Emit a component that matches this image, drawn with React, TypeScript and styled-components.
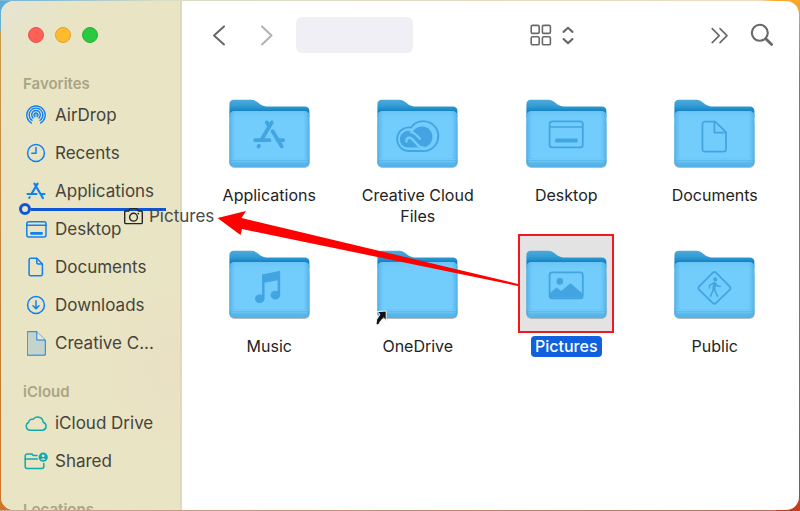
import React from "react";
import styled, { createGlobalStyle } from "styled-components";

const GlobalStyle = createGlobalStyle`
  *, *::before, *::after { box-sizing: border-box; }
  body {
    margin: 0;
    font-family: Inter, "Liberation Sans", sans-serif;
    color: #232323;
    background: #c2892f;
  }
  button { font: inherit; color: inherit; background: none; border: 0; padding: 0; }
`;

const Wallpaper = styled.div`
  height: 100vh;
  padding: 1px;
  background:
    linear-gradient(to right, #c9a98f, #bb705a 97%, transparent 97%) bottom / 100% 1px no-repeat,
    linear-gradient(to right, #7cb7d6 4%, #d9dcc4 20%, #ecdcc0 95%, transparent 97%) top / 100% 1px no-repeat,
    linear-gradient(to bottom, #fba92a, #b56d1f 16%, #b5642c 60%, #c63d1c) right / 50% 100% no-repeat,
    linear-gradient(to bottom, #59abd9, #6ab0d4 28px, #c99a4a 34px, #bf8439 60%, #cf7526) left / 50% 100% no-repeat;
`;

const Window = styled.div`
  position: relative;
  display: flex;
  height: 100%;
  overflow: hidden;
  border-radius: 13px;
  background: #ffffff;
`;

const Sidebar = styled.nav`
  flex: 0 0 181px;
  overflow: hidden;
  border-right: 2px solid #e0dabb;
  background:
    radial-gradient(circle at 0 0, #e6e4d2, transparent 80px),
    radial-gradient(circle at 100% 72%, #e9e0c5, transparent 80px),
    #e9e4c4;
`;

const WindowControls = styled.div`
  display: flex;
  align-items: center;
  gap: 11px;
  height: 68px;
  padding-left: 27px;
`;

const ControlDot = styled.button<{ $fill: string; $edge: string }>`
  width: 16px;
  height: 16px;
  border-radius: 50%;
  background: ${(p) => p.$fill};
  border: 1px solid ${(p) => p.$edge};
`;

const Section = styled.section`
  margin-bottom: 19px;
`;

const SectionTitle = styled.h2`
  margin: 4px 0 1px;
  padding-left: 22px;
  font-size: 15px;
  line-height: 22px;
  font-weight: 600;
  color: #a9a486;
`;

const NavList = styled.ul`
  margin: 0;
  padding: 0;
  list-style: none;
`;

const NavRow = styled.li`
  position: relative;
`;

const NavLink = styled.a`
  display: flex;
  align-items: center;
  gap: 6px;
  height: 38px;
  padding: 0 16px 0 22px;
  font-size: 17px;
  color: #45433b;
  text-decoration: none;
  white-space: nowrap;
`;

const NavIcon = styled.span<{ $color: string }>`
  flex: 0 0 26px;
  display: flex;
  justify-content: center;
  color: ${(p) => p.$color};
`;

const InsertionMark = styled.span`
  position: absolute;
  left: 18px;
  right: 14px;
  bottom: -5px;
  display: flex;
  align-items: center;

  &::before {
    content: "";
    width: 12px;
    height: 12px;
    border: 3px solid #0f56d6;
    border-radius: 50%;
  }
  &::after {
    content: "";
    flex: 1;
    height: 3px;
    background: #0f56d6;
  }
`;

const DragGhost = styled.div`
  position: absolute;
  left: 122px;
  top: 205px;
  display: flex;
  align-items: center;
  gap: 5px;
  font-size: 17px;
  line-height: 20px;
  color: #4a4a46;
`;

const Main = styled.main`
  flex: 1;
  min-width: 0;
`;

const Toolbar = styled.header`
  display: flex;
  align-items: center;
  height: 67px;
  padding: 0 25px 0 27px;
  color: #686868;
`;

const ToolButton = styled.button<{ $dim?: boolean }>`
  display: flex;
  align-items: center;
  justify-content: center;
  min-width: 20px;
  height: 32px;
  opacity: ${(p) => (p.$dim ? 0.5 : 1)};
`;

const HistoryButtons = styled.div`
  display: flex;
  gap: 28px;
`;

const TitlePlate = styled.div`
  flex: 0 0 117px;
  height: 36px;
  margin-left: 19px;
  border-radius: 6px;
  background: #f0eff5;
`;

const ViewButton = styled(ToolButton)`
  gap: 10px;
  margin-left: 117px;
`;

const ToolbarEnd = styled.div`
  display: flex;
  gap: 20px;
  margin-left: auto;
`;

const FileGrid = styled.div`
  display: grid;
  grid-template-columns: repeat(4, 1fr);
  row-gap: 7px;
  padding: 15px 10px 0 13px;
`;

const FileItem = styled.button`
  display: flex;
  flex-direction: column;
  align-items: center;
  gap: 3px;
`;

const Thumb = styled.span<{ $selected?: boolean }>`
  display: flex;
  align-items: center;
  justify-content: center;
  width: 96px;
  height: 99px;
  padding-top: 2px;
  border: 2px solid ${(p) => (p.$selected ? "#f3161c" : "transparent")};
  background: ${(p) => (p.$selected ? "#e4e3e4" : "transparent")};
`;

const FileName = styled.span<{ $selected?: boolean }>`
  max-width: 124px;
  padding: 0 4px;
  border-radius: 4px;
  font-size: 16px;
  line-height: 21px;
  font-weight: ${(p) => (p.$selected ? 500 : 400)};
  color: ${(p) => (p.$selected ? "#ffffff" : "#232323")};
  background: ${(p) => (p.$selected ? "#1160de" : "transparent")};
`;

const Annotation = styled.svg`
  position: absolute;
  left: 216px;
  top: 209px;
  pointer-events: none;
`;

const line = {
  fill: "none",
  stroke: "currentColor",
  strokeLinecap: "round",
  strokeLinejoin: "round",
} as const;

const AirDropIcon = () => (
  <svg width="20" height="20" viewBox="0 0 20 20" {...line} strokeWidth="1.4">
    <path d="M5.4 18.1A9.2 9.2 0 1 1 14.6 18.1" />
    <path d="M6 15.4A6.8 6.8 0 1 1 14 15.4" />
    <path d="M7 12.9A4.3 4.3 0 1 1 13 12.9" />
    <path d="M8.8 11.6A2 2 0 1 1 11.2 11.6" />
    <circle cx="10" cy="10" r=".8" fill="currentColor" stroke="none" />
  </svg>
);

const ClockIcon = () => (
  <svg width="20" height="20" viewBox="0 0 20 20" {...line} strokeWidth="1.5">
    <circle cx="10" cy="10" r="8.4" />
    <path d="M10 4.6V10.2H5.8" />
  </svg>
);

const AppsIcon = () => (
  <svg width="20" height="18" viewBox="0 0 20 18" {...line} strokeWidth="2.2">
    <path d="M11.6 1.6L5.4 12" />
    <path d="M8.5 1.6L9.3 3" />
    <path d="M11 6L16.9 16" />
    <path d="M1.6 12H10.4M15.6 12H18.4" />
    <path d="M3.6 15.3L3.3 15.8" />
  </svg>
);

const DesktopIcon = () => (
  <svg width="21" height="17" viewBox="0 0 21 17" {...line} strokeWidth="1.5">
    <rect x=".8" y=".8" width="19.2" height="15.2" rx="2" />
    <path d="M1 4.2H20" />
    <rect x="4.3" y="11" width="12.4" height="2.8" rx=".5" fill="currentColor" stroke="none" />
  </svg>
);

const DocumentIcon = () => (
  <svg width="16" height="20" viewBox="0 0 16 20" {...line} strokeWidth="1.5">
    <path d="M2.6 1.3H8.8L14.4 7V17.2A1.5 1.5 0 0 1 12.9 18.7H2.6A1.5 1.5 0 0 1 1.1 17.2V2.8A1.5 1.5 0 0 1 2.6 1.3Z" />
    <path d="M8.8 1.5V5.7A1.2 1.2 0 0 0 10 6.9H14.2" />
  </svg>
);

const DownloadIcon = () => (
  <svg width="20" height="20" viewBox="0 0 20 20" {...line} strokeWidth="1.5">
    <circle cx="10" cy="10" r="8.4" />
    <path d="M10 5.8V13.6M7 10.8L10 13.8L13 10.8" />
  </svg>
);

const FileIcon = () => (
  <svg width="19" height="25" viewBox="0 0 19 25" {...line} strokeWidth="1">
    <path d="M.6 .7H9.8L18.3 9V24.2H.6Z" fill="#c2d4cb" />
    <path d="M9.8 .8V9H18.1" fill="#e5e8d6" />
  </svg>
);

const CloudIcon = () => (
  <svg width="23" height="17" viewBox="0 0 23 17" {...line} strokeWidth="1.5">
    <path d="M5.2 15.3A4.2 4.2 0 0 1 3.7 7.3A3.2 3.2 0 0 1 8 4.4A5.6 5.6 0 0 1 18.2 7.2A4.2 4.2 0 0 1 17.8 15.3Z" />
  </svg>
);

const SharedIcon = () => (
  <svg width="24" height="18" viewBox="0 0 24 18" {...line} strokeWidth="1.5">
    <path d="M13 3.6H9.5L7.8 1.9H3.2A2 2 0 0 0 1.2 3.9V14.6A2 2 0 0 0 3.2 16.6H17.8A2 2 0 0 0 19.8 14.6V11.6" />
    <path d="M1.2 6.9H13.4" />
    <circle cx="19.2" cy="5.2" r="4.6" fill="currentColor" stroke="none" />
    <circle cx="19.2" cy="3.8" r="1.4" fill="#e9e4c3" stroke="none" />
    <path d="M16.7 7.8A2.6 2.2 0 0 1 21.7 7.8Z" fill="#e9e4c3" stroke="none" />
  </svg>
);

const CameraIcon = () => (
  <svg width="21" height="18" viewBox="0 0 21 18" {...line} strokeWidth="1.4" color="#252525">
    <path d="M2.9 4H5.8L6.8 2.2A1.2 1.2 0 0 1 7.8 1.6H13.2A1.2 1.2 0 0 1 14.2 2.2L15.2 4H18.1A1.2 1.2 0 0 1 19.3 5.2V15.4A1.2 1.2 0 0 1 18.1 16.6H2.9A1.2 1.2 0 0 1 1.7 15.4V5.2A1.2 1.2 0 0 1 2.9 4Z" />
    <circle cx="10.5" cy="10.2" r="3.9" />
    <circle cx="15.3" cy="6.6" r=".9" fill="currentColor" stroke="none" />
  </svg>
);

const ChevronIcon = ({ forward }: { forward?: boolean }) => (
  <svg width="14" height="22" viewBox="0 0 14 22" {...line} strokeWidth="2">
    <path d={forward ? "M2 2.4L11.5 11.4L2 20.4" : "M12 2.4L2 11.4L12 20.4"} />
  </svg>
);

const IconViewIcon = () => (
  <svg width="22" height="22" viewBox="0 0 22 22" {...line} strokeWidth="1.6">
    <rect x="1.2" y="1.4" width="8" height="8" rx="1.4" />
    <rect x="12.4" y="1.4" width="8" height="8" rx="1.4" />
    <rect x="1.2" y="12.8" width="8" height="8" rx="1.4" />
    <rect x="12.4" y="12.8" width="8" height="8" rx="1.4" />
  </svg>
);

const UpDownIcon = () => (
  <svg width="12" height="20" viewBox="0 0 12 20" {...line} strokeWidth="2.1">
    <path d="M1.5 6.9L6 2.8L10.5 6.9M1.5 14L6 18.1L10.5 14" />
  </svg>
);

const MoreIcon = () => (
  <svg width="18" height="18" viewBox="0 0 18 18" {...line} strokeWidth="1.6">
    <path d="M1.2 2.6L8.2 9.6L1.2 16.6M9 2.6L16 9.6L9 16.6" />
  </svg>
);

const SearchIcon = () => (
  <svg width="24" height="24" viewBox="0 0 24 24" {...line} strokeWidth="2.1">
    <circle cx="9.8" cy="9.8" r="8" />
    <path d="M16 16L21.6 21.6" strokeWidth="2.8" />
  </svg>
);

const INK = "#42a5e1";

const AppsGlyph = () => (
  <g {...line} stroke={INK} strokeWidth="3.8">
    <path d="M42.8 23.5L32.6 40.5M37.8 23.5L39.5 26.4M43.6 32.2L52.8 47.4" />
    <path d="M26.2 41.2H40.4M48.8 41.2H54.2M30 46.8L29.5 47.6" />
  </g>
);

const CloudGlyph = () => (
  <g {...line} stroke="none">
    <path
      d="M31.4 52A11.8 11.8 0 1 1 34 28.6A15 15 0 1 1 44.5 52Z"
      stroke={INK}
      strokeWidth="1.8"
    />
    <path d="M31.5 48.6A8.4 8.4 0 1 1 35.6 33A10.6 10.6 0 1 1 44.5 48.6Z" fill={INK} />
    <path
      d="M29.4 42.6Q29.2 38.6 32.4 38.8Q34 39 35.4 40.4L41.6 46.8Q43.4 48.6 46.4 48.4"
      stroke="#71ccfb"
      strokeWidth="2.4"
    />
    <path d="M33.6 33Q36.6 33.4 39 35.8L43 39.8" stroke="#71ccfb" strokeWidth="2.2" />
  </g>
);

const DesktopGlyph = () => (
  <g {...line} stroke={INK} strokeWidth="1.8">
    <rect x="23.6" y="22.4" width="33.2" height="26" rx="2.6" />
    <path d="M24 28H56.6" strokeWidth="1.5" />
    <rect x="29.2" y="39.6" width="22.4" height="4" rx=".8" fill={INK} stroke="none" />
  </g>
);

const DocumentGlyph = () => (
  <g {...line} stroke={INK} strokeWidth="1.8">
    <path d="M31 22.6H41.2L52 33.2V50A2.6 2.6 0 0 1 49.4 52.6H31A2.6 2.6 0 0 1 28.4 50V25.2A2.6 2.6 0 0 1 31 22.6Z" />
    <path d="M40.4 23V33.6H51.6" />
  </g>
);

const MusicGlyph = () => (
  <path
    d="M33 24.6L51.2 20.8V45.2A4.8 4.4 0 1 1 48.6 41.2V30.2L35.6 32.8V48.8A4.8 4.4 0 1 1 33 44.8Z"
    fill={INK}
  />
);

const PictureGlyph = () => (
  <g>
    <rect x="23.6" y="22.4" width="33.2" height="26" rx="2.6" {...line} stroke={INK} strokeWidth="1.8" />
    <circle cx="33.8" cy="31.4" r="3.3" fill={INK} />
    <path d="M24 43L30.6 37.4L35.2 41L44.6 33.2L56.4 43.4V47.8H24Z" fill={INK} />
  </g>
);

const PublicGlyph = () => (
  <g {...line} stroke={INK} strokeWidth="1.8">
    <path d="M38.6 22.9Q40.4 21.1 42.2 22.9L55.6 36.3Q57.2 38.1 55.6 39.9L42.2 52.9Q40.4 54.7 38.6 52.9L25.2 39.9Q23.6 38.1 25.2 36.3Z" />
    <circle cx="41.2" cy="29.4" r="2.1" fill={INK} stroke="none" />
    <path d="M40.6 33.6L39.9 38.6" strokeWidth="3.2" />
    <path d="M39.4 39.6L36.4 46.4M40.6 39.6L43.6 46.4M39 33.4L35.8 35.2L35.4 38M42 34L43.6 36.2L46.4 36.2" strokeWidth="1.5" />
  </g>
);

const AliasArrow = () => (
  <path
    d="M.2 61.6L9.2 61V70.4L6.6 68Q3.6 70 1.2 75.2L-1 74Q-1.4 69.4 3 64.4Z"
    fill="#111111"
    stroke="#f5f5f5"
    strokeWidth="1"
  />
);

const Folder = ({ id, children }: { id: string; children?: React.ReactNode }) => (
  <svg width="81" height="70" viewBox="0 0 81 70" overflow="visible" aria-hidden="true">
    <defs>
      <linearGradient id={`${id}-back`} x1="0" y1="0" x2="0" y2="1">
        <stop offset="0" stopColor="#4aabdc" />
        <stop offset=".35" stopColor="#359cd4" />
        <stop offset=".65" stopColor="#1383c6" />
      </linearGradient>
      <linearGradient id={`${id}-front`} x1="0" y1="0" x2="0" y2="1">
        <stop offset="0" stopColor="#6ac5f5" />
        <stop offset=".12" stopColor="#73cdfc" />
        <stop offset=".84" stopColor="#73cdfc" />
        <stop offset=".87" stopColor="#5fbdee" />
        <stop offset="1" stopColor="#52b1e6" />
      </linearGradient>
      <linearGradient id={`${id}-sides`}>
        <stop offset="0" stopColor="#45a6dd" stopOpacity=".75" />
        <stop offset=".08" stopColor="#5bb9ec" stopOpacity="0" />
        <stop offset=".92" stopColor="#5bb9ec" stopOpacity="0" />
        <stop offset="1" stopColor="#45a6dd" stopOpacity=".75" />
      </linearGradient>
    </defs>
    <rect x=".4" y="20" width="80.2" height="49" rx="5" fill="#8d989f" opacity=".65" />
    <path
      d="M.4 18V5.4Q.4 .8 5 .8H22.5Q25.5 .8 28 2.8L31.5 5.6Q34 7.4 37 7.4H75.5Q80.4 7.4 80.4 12V18Z"
      fill={`url(#${id}-back)`}
    />
    <rect x=".4" y="12" width="80" height="56" rx="5" fill={`url(#${id}-front)`} />
    <rect x=".4" y="12" width="80" height="56" rx="5" fill={`url(#${id}-sides)`} />
    <path d="M2 60.5H79M2 62.8H79" stroke="#7dcffa" strokeWidth=".6" />
    {children}
  </svg>
);

const BLUE = "#1080f2";
const TEAL = "#12a8b0";

type SidebarSection = {
  title: string;
  color: string;
  items: { name: string; icon: React.ReactNode; dropAfter?: boolean }[];
};

const sections: SidebarSection[] = [
  {
    title: "Favorites",
    color: BLUE,
    items: [
      { name: "AirDrop", icon: <AirDropIcon /> },
      { name: "Recents", icon: <ClockIcon /> },
      { name: "Applications", icon: <AppsIcon />, dropAfter: true },
      { name: "Desktop", icon: <DesktopIcon /> },
      { name: "Documents", icon: <DocumentIcon /> },
      { name: "Downloads", icon: <DownloadIcon /> },
      { name: "Creative C...", icon: <FileIcon /> },
    ],
  },
  {
    title: "iCloud",
    color: TEAL,
    items: [
      { name: "iCloud Drive", icon: <CloudIcon /> },
      { name: "Shared", icon: <SharedIcon /> },
    ],
  },
  { title: "Locations", color: BLUE, items: [] },
];

const files: { name: string; glyph: React.ReactNode; selected?: boolean }[] = [
  { name: "Applications", glyph: <AppsGlyph /> },
  { name: "Creative Cloud Files", glyph: <CloudGlyph /> },
  { name: "Desktop", glyph: <DesktopGlyph /> },
  { name: "Documents", glyph: <DocumentGlyph /> },
  { name: "Music", glyph: <MusicGlyph /> },
  { name: "OneDrive", glyph: <AliasArrow /> },
  { name: "Pictures", glyph: <PictureGlyph />, selected: true },
  { name: "Public", glyph: <PublicGlyph /> },
];

export default function App() {
  return (
    <>
      <GlobalStyle />
      <Wallpaper>
        <Window>
          <Sidebar aria-label="Sidebar">
            <WindowControls>
              <ControlDot aria-label="Close" $fill="#fe5f57" $edge="#e5544c" />
              <ControlDot aria-label="Minimize" $fill="#febb2e" $edge="#e0a32a" />
              <ControlDot aria-label="Zoom" $fill="#29c940" $edge="#25b139" />
            </WindowControls>
            {sections.map((section) => (
              <Section key={section.title}>
                <SectionTitle>{section.title}</SectionTitle>
                <NavList>
                  {section.items.map((item) => (
                    <NavRow key={item.name}>
                      <NavLink href="#">
                        <NavIcon $color={section.color}>{item.icon}</NavIcon>
                        {item.name}
                      </NavLink>
                      {item.dropAfter && <InsertionMark />}
                    </NavRow>
                  ))}
                </NavList>
              </Section>
            ))}
          </Sidebar>
          <Main>
            <Toolbar>
              <HistoryButtons>
                <ToolButton aria-label="Back">
                  <ChevronIcon />
                </ToolButton>
                <ToolButton aria-label="Forward" $dim>
                  <ChevronIcon forward />
                </ToolButton>
              </HistoryButtons>
              <TitlePlate />
              <ViewButton aria-label="View as icons">
                <IconViewIcon />
                <UpDownIcon />
              </ViewButton>
              <ToolbarEnd>
                <ToolButton aria-label="More">
                  <MoreIcon />
                </ToolButton>
                <ToolButton aria-label="Search">
                  <SearchIcon />
                </ToolButton>
              </ToolbarEnd>
            </Toolbar>
            <FileGrid>
              {files.map((file, index) => (
                <FileItem key={file.name} aria-pressed={!!file.selected}>
                  <Thumb $selected={file.selected}>
                    <Folder id={`folder-${index}`}>{file.glyph}</Folder>
                  </Thumb>
                  <FileName $selected={file.selected}>{file.name}</FileName>
                </FileItem>
              ))}
            </FileGrid>
          </Main>
          <DragGhost>
            <CameraIcon />
            Pictures
          </DragGhost>
          <Annotation width="302" height="78" viewBox="0 0 302 78" aria-hidden="true">
            <path d="M.5 8L29 1L24.5 8L301 74V76L25 19L23.5 25Z" fill="#fe0000" />
          </Annotation>
        </Window>
      </Wallpaper>
    </>
  );
}
